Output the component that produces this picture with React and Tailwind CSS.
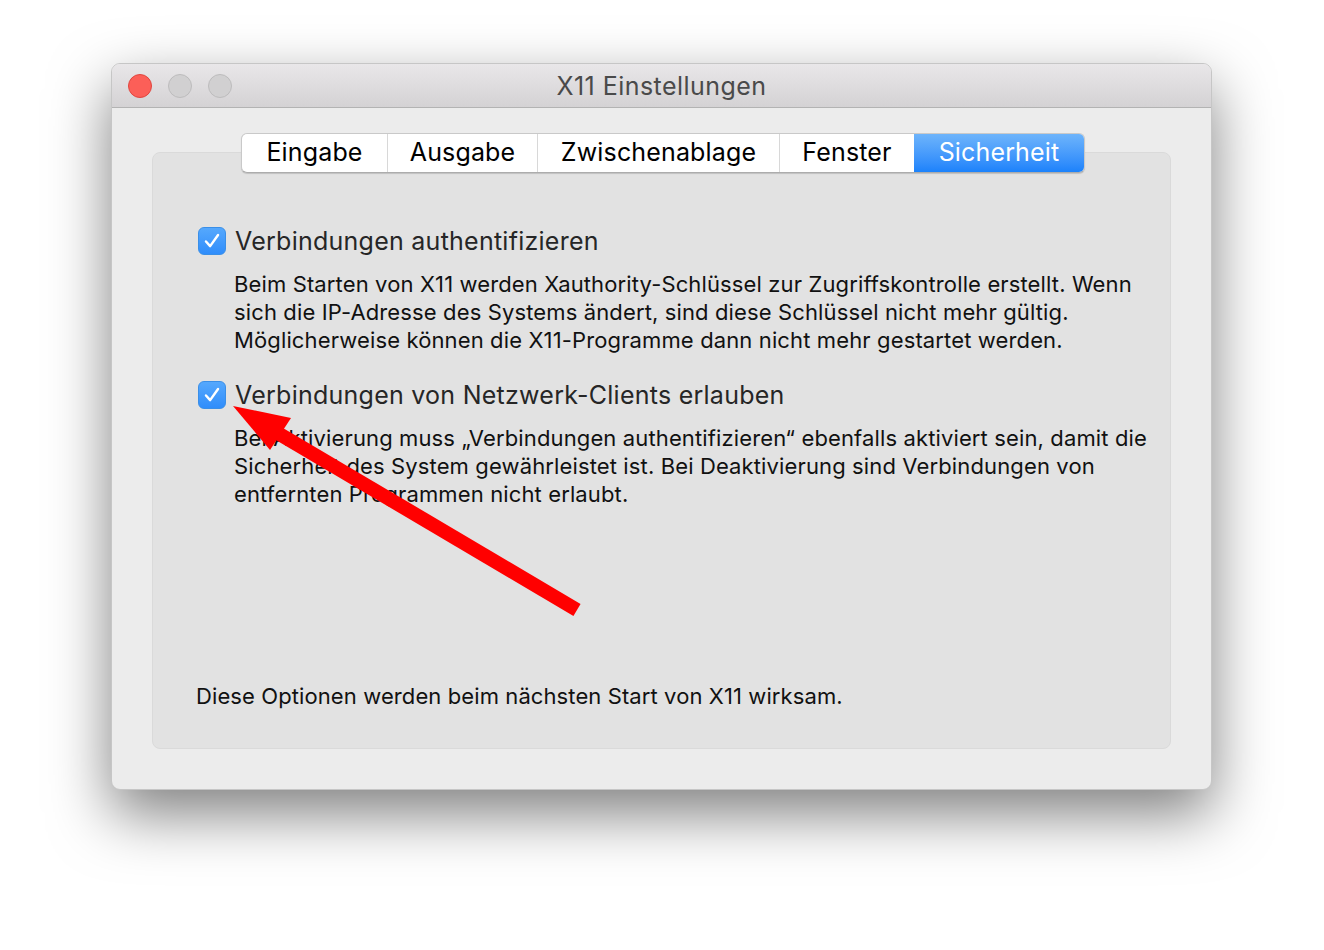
const tabs = [
  { label: 'Eingabe', w: 'w-[145px]' },
  { label: 'Ausgabe', w: 'w-[150px]' },
  { label: 'Zwischenablage', w: 'w-[242px]' },
  { label: 'Fenster', w: 'w-[135px]' },
  { label: 'Sicherheit', w: 'w-[170px]', active: true },
];

function Checkbox() {
  return (
    <div className="w-[28px] h-[28px] shrink-0 rounded-[6px] bg-gradient-to-b from-[#55a8fd] to-[#2f8dfb] border border-[#3a8fe8] flex items-center justify-center">
      <svg width="28" height="28" viewBox="0 0 28 28">
        <path d="M7.5 14.5 L12 19.5 L20.5 7.5" fill="none" stroke="#fff" strokeWidth="2.6" strokeLinecap="round" strokeLinejoin="round" />
      </svg>
    </div>
  );
}

function Option({ title, children }) {
  return (
    <div>
      <div className="flex items-center gap-[9px]">
        <Checkbox />
        <span className="text-[25px] leading-[28px] tracking-[0.25px] text-[#262626]">{title}</span>
      </div>
      <p className="mt-[15px] ml-[36px] whitespace-nowrap text-[22px] leading-[28px] tracking-[0.13px] text-[#111]">{children}</p>
    </div>
  );
}

export default function App() {
  return (
    <div className="relative w-[1324px] h-[950px] bg-white overflow-hidden" style={{ fontFamily: 'Inter, "Liberation Sans", sans-serif' }}>
      <div className="absolute left-[111px] top-[63px] w-[1101px] h-[727px] rounded-[9px] bg-[#ececec] border border-[#c6c6c6] shadow-[0_24px_60px_rgba(0,0,0,0.5)] overflow-hidden flex flex-col">
        {/* Titelleiste */}
        <div className="relative h-[44px] shrink-0 bg-gradient-to-b from-[#e9e7e9] to-[#d4d2d4] border-b border-[#b3b3b3] flex items-center justify-center">
          <div className="absolute left-[16px] top-[10px] flex gap-[16px]">
            <div className="w-[24px] h-[24px] rounded-full bg-[#fc5f58] border border-[#e0463f]" />
            <div className="w-[24px] h-[24px] rounded-full bg-[#d1d0d1] border border-[#bdbcbd]" />
            <div className="w-[24px] h-[24px] rounded-full bg-[#d1d0d1] border border-[#bdbcbd]" />
          </div>
          <span className="pt-[3px] text-[25px] tracking-[0.45px] text-[#4a4a4a]">X11 Einstellungen</span>
        </div>

        {/* Inhalt */}
        <div className="flex-1 px-[40px] pt-[25px]">
          <div className="relative z-10 flex justify-center pl-[3px]">
            <div className="flex h-[40px] rounded-[6px] bg-white border border-[#c9c9c9] border-b-[#acacac] shadow-[0_1px_1px_rgba(0,0,0,0.15)] overflow-hidden">
              {tabs.map((t, i) => (
                <div
                  key={t.label}
                  className={`${t.w} flex items-center justify-center text-[25px] tracking-[0.15px] ${t.active ? 'bg-gradient-to-b from-[#6db4fb] to-[#1b82fb] text-white' : 'text-black'} ${i > 0 && !t.active ? 'border-l border-[#d8d8d8]' : ''}`}
                >
                  {t.label}
                </div>
              ))}
            </div>
          </div>

          <div className="-mt-[21px] h-[597px] rounded-[8px] bg-[#e2e2e2] border border-[#dadada] flex flex-col px-[45px] pt-[74px] pb-[38px]">
            <Option title="Verbindungen authentifizieren">
              Beim Starten von X11 werden Xauthority-Schlüssel zur Zugriffskontrolle erstellt. Wenn
              <br />
              sich die IP-Adresse des Systems ändert, sind diese Schlüssel nicht mehr gültig.
              <br />
              Möglicherweise können die X11-Programme dann nicht mehr gestartet werden.
            </Option>
            <div className="mt-[27px]">
              <Option title="Verbindungen von Netzwerk-Clients erlauben">
                Bei Aktivierung muss „Verbindungen authentifizieren“ ebenfalls aktiviert sein, damit die
                <br />
                Sicherheit des System gewährleistet ist. Bei Deaktivierung sind Verbindungen von
                <br />
                entfernten Programmen nicht erlaubt.
              </Option>
            </div>
            <p className="mt-auto -ml-[2px] text-[22px] leading-[28px] tracking-[0.1px] text-[#111]">
              Diese Optionen werden beim nächsten Start von X11 wirksam.
            </p>
          </div>
        </div>
      </div>

      {/* Roter Pfeil */}
      <svg className="absolute left-0 top-0 pointer-events-none" width="1324" height="950" viewBox="0 0 1324 950">
        <line x1="577" y1="610" x2="276" y2="432" stroke="#ff0000" strokeWidth="14" />
        <polygon points="233,406 291,418 270,450" fill="#ff0000" />
      </svg>
    </div>
  );
}
